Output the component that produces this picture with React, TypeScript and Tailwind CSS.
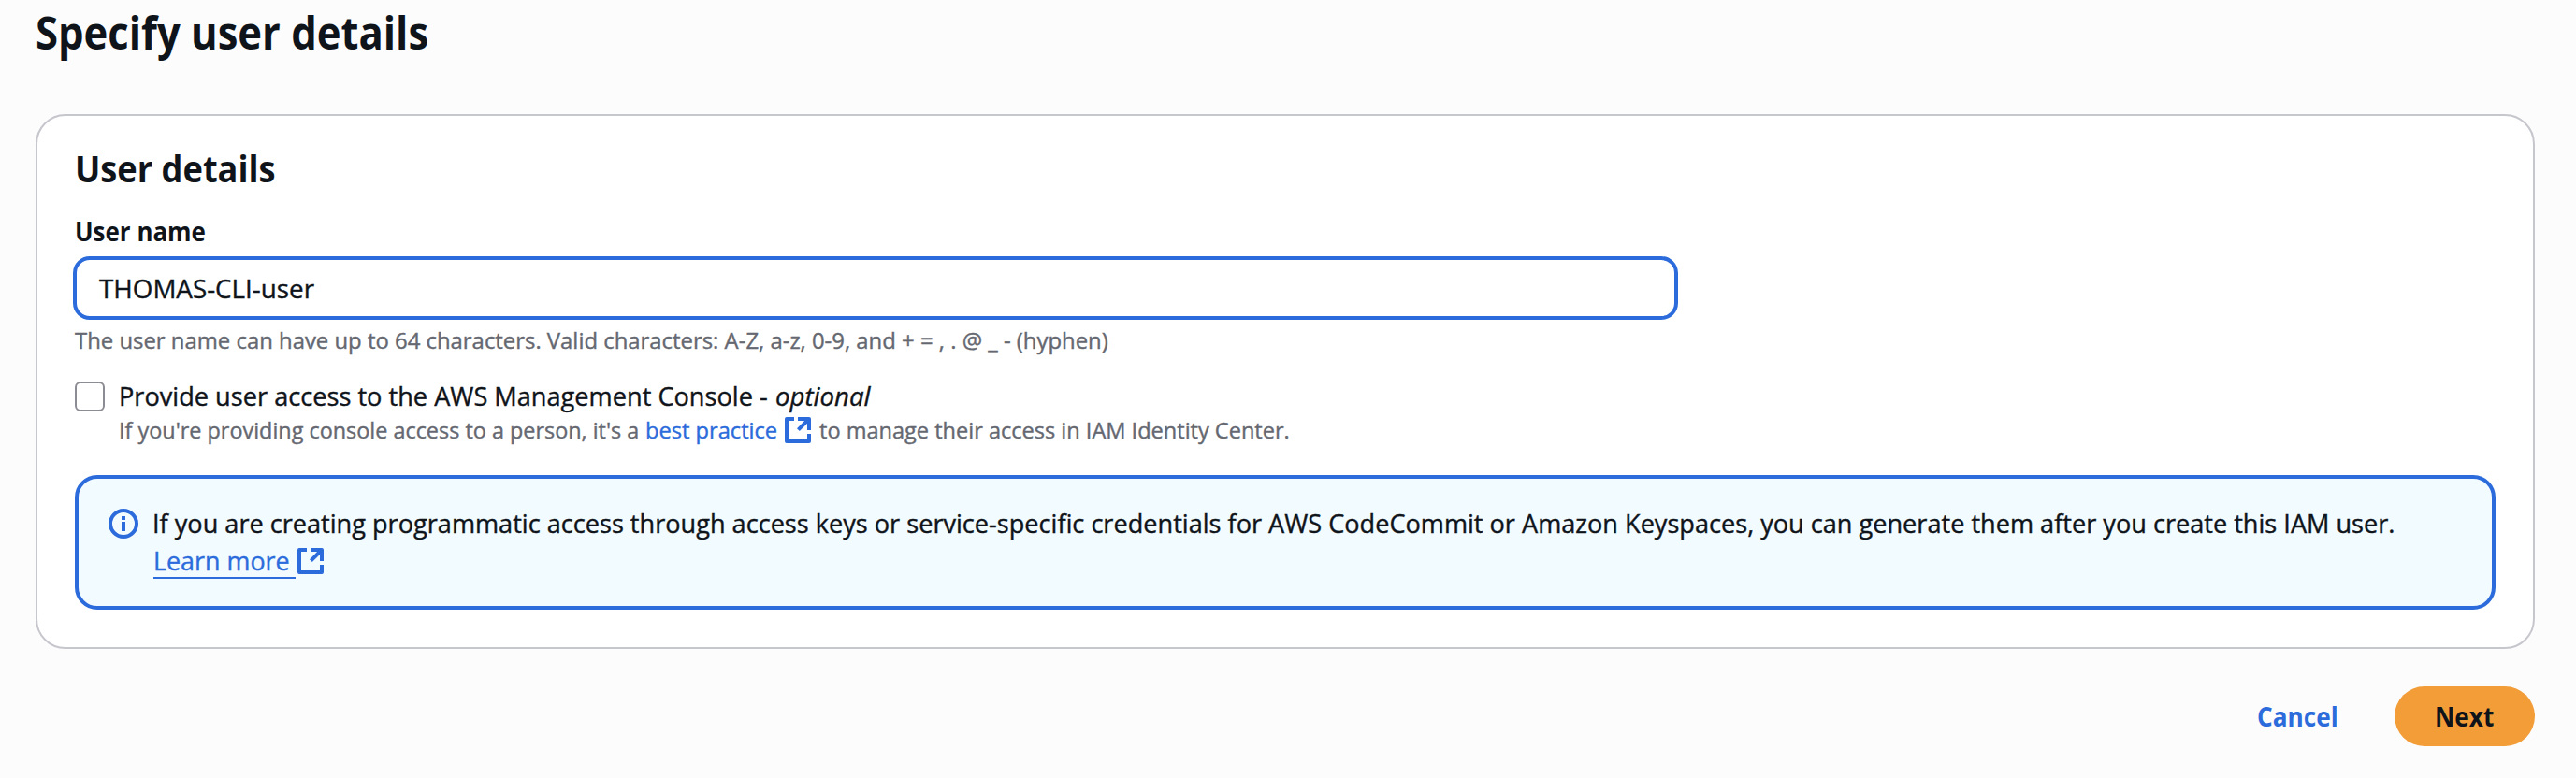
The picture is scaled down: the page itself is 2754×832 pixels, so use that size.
import type { ReactNode } from "react";

/* Text run with an optional fixed advance width; the glyphs inside are slightly condensed. */
function Run({ box = "", fit, children }: { box?: string; fit: string; children: ReactNode }) {
  return (
    <span className={`inline-block whitespace-nowrap ${box}`}>
      <span className={`inline-block origin-left whitespace-pre ${fit}`}>{children}</span>
    </span>
  );
}

function ExternalIcon({ className = "" }: { className?: string }) {
  return (
    <svg viewBox="0 0 16 16" className={`h-8 w-8 shrink-0 ${className}`} fill="none" stroke="#2b6bdb" strokeWidth="2">
      <path strokeLinejoin="round" d="M6 2H2v12h12v-4" />
      <path strokeLinejoin="round" d="M8 2h6v6" />
      <path d="M14 2 8.2 7.8" />
    </svg>
  );
}

function InfoIcon() {
  return (
    <svg viewBox="0 0 16 16" className="mt-[5px] h-8 w-8 shrink-0">
      <circle cx="8" cy="8" r="7" fill="none" stroke="#2b6bdb" strokeWidth="2" />
      <path d="M7 4h2v2H7zM7 7h2v5H7z" fill="#2b6bdb" />
    </svg>
  );
}

export default function App() {
  return (
    <main className="h-[832px] w-[2754px] overflow-hidden bg-[#fcfcfd] pt-[5px] pr-11 pl-[38px] font-['Open_Sans','Noto_Sans',sans-serif] text-[28px] leading-[40px] text-[#0f141a] [-webkit-text-stroke:0.4px]">
      <h1 className="h-[60px] text-[48px] leading-[60px] font-bold [-webkit-text-stroke:0px]">
        <Run fit="scale-x-[0.908]">Specify user details</Run>
      </h1>

      <section className="mt-[57px] h-[572px] rounded-[32px] border-2 border-[#c6c6cd] bg-white px-10 pt-8">
        <h2 className="h-12 text-[40px] leading-[48px] font-bold [-webkit-text-stroke:0px]">
          <Run fit="scale-x-[0.905]">User details</Run>
        </h2>

        <label className="mt-[23px] block h-10 font-bold [-webkit-text-stroke:0px]">
          <Run fit="scale-x-[0.927]">User name</Run>
        </label>
        <div className="mt-[7px] -ml-0.5 h-[68px] w-[1716px] rounded-[18px] border-4 border-[#2b6bdb] bg-white px-6 leading-[60px]">
          <Run fit="scale-x-[0.992]">THOMAS-CLI-user</Run>
        </div>
        <p className="mt-1.5 h-8 text-[24px] leading-[32px] text-[#656871]">
          <Run fit="scale-x-[0.995]">The user name can have up to 64 characters. Valid characters: A-Z, a-z, 0-9, and + = , . @ _ - (hyphen)</Run>
        </p>

        <div className="mt-[23px] flex">
          <span className="mt-[5px] h-8 w-8 shrink-0 rounded-md border-2 border-[#8c8c94] bg-white" />
          <div className="ml-[15px]">
            <p className="flex h-10">
              <Run box="w-[702px]" fit="scale-x-[0.97]">Provide user access to the AWS Management Console -</Run>
              <Run fit="scale-x-[0.985] italic">optional</Run>
            </p>
            <p className="mt-px flex h-8 text-[24px] leading-[32px] text-[#656871]">
              <Run box="w-[563px]" fit="scale-x-[0.975]">If you're providing console access to a person, it's a</Run>
              <a className="flex text-[#2b6bdb]">
                <Run box="w-[147px]" fit="scale-x-[0.985]">best practice</Run>
                <ExternalIcon />
              </a>
              <Run box="ml-[7px]" fit="scale-x-[0.981]">to manage their access in IAM Identity Center.</Run>
            </p>
          </div>
        </div>

        <div className="mt-8 flex h-36 w-[2588px] rounded-3xl border-4 border-[#2b6bdb] bg-[#f2fbff] pt-[27px] pl-8">
          <InfoIcon />
          <div className="ml-[14px]">
            <p className="ml-px h-10">
              <Run fit="scale-x-[0.9685]">
                If you are creating programmatic access through access keys or service-specific credentials for AWS CodeCommit or Amazon Keyspaces, you can generate them after you create this IAM user.
              </Run>
            </p>
            <a className="ml-0.5 flex h-10 text-[#2b6bdb]">
              <span className="h-10 w-[152px] border-b-2 border-[#2b6bdb]">
                <Run fit="scale-x-[0.96]">Learn more</Run>
              </span>
              <ExternalIcon className="mt-[5px]" />
            </a>
          </div>
        </div>
      </section>

      <footer className="mt-10 flex h-16 justify-end leading-[64px] font-bold [-webkit-text-stroke:0px]">
        <a className="mr-[59px] w-[88px] text-[#2b6bdb]">
          <Run fit="scale-x-[0.935]">Cancel</Run>
        </a>
        <button className="h-16 w-[150px] rounded-full bg-[#f29d38] pl-[43px] text-left">
          <Run fit="scale-x-[0.935]">Next</Run>
        </button>
      </footer>
    </main>
  );
}
